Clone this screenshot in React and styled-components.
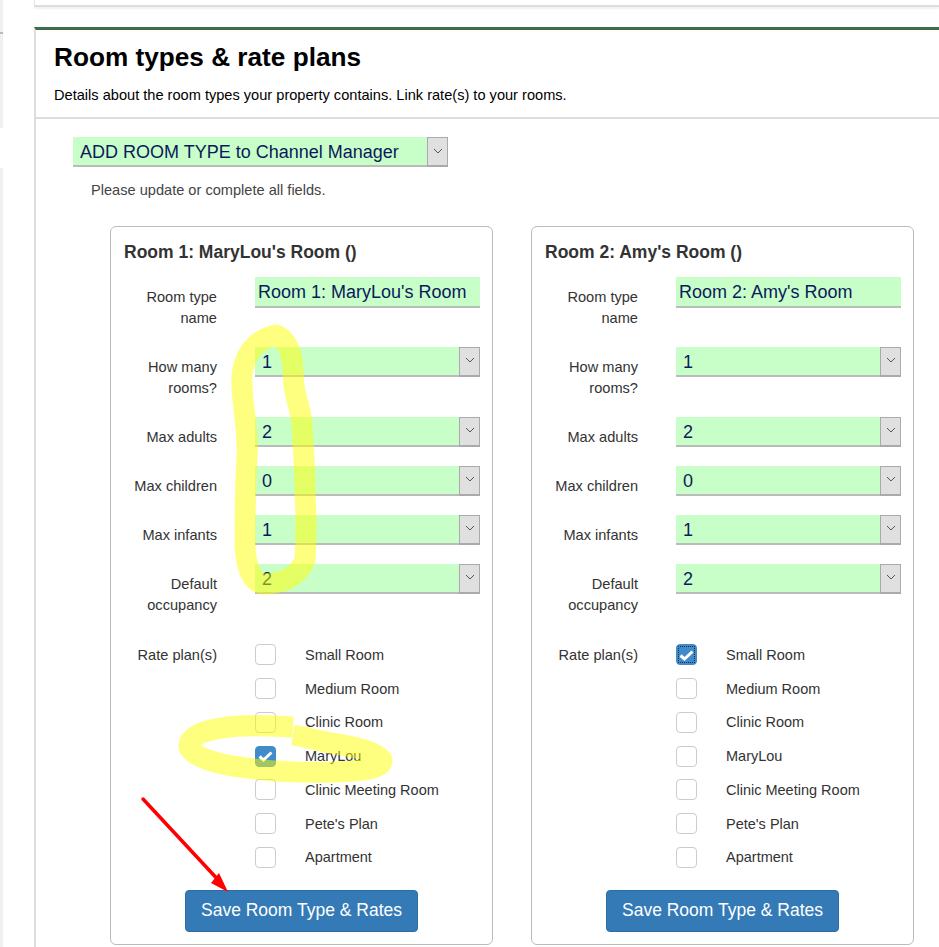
import styled, { createGlobalStyle } from "styled-components";

const GlobalStyle = createGlobalStyle`
  html, body {
    margin: 0;
    padding: 0;
    height: 947px;
    overflow: hidden;
    background: #fff;
  }
  * {
    box-sizing: border-box;
  }
`;

const Page = styled.div`
  position: relative;
  display: flex;
  width: 939px;
  height: 947px;
  overflow: hidden;
  font-family: "Liberation Sans", Arial, sans-serif;
  font-size: 14.5px;
  color: #333;
`;

const Rail = styled.div`
  display: flex;
  flex-direction: column;
  width: 3px;
  margin-right: 31px;
  flex-shrink: 0;
`;

const RailBlock = styled.div`
  background: #f0f0f0;
  height: ${(p) => p.$h}px;
  flex-grow: ${(p) => (p.$grow ? 1 : 0)};
  margin-bottom: ${(p) => p.$gap || 0}px;
`;

const RailLine = styled.div`
  background: #bbb;
  height: 2px;
`;

const Main = styled.div`
  flex: 1;
  min-width: 0;
  display: flex;
  flex-direction: column;
`;

const TopCard = styled.div`
  height: 7px;
  border-left: 1px solid #e6e6e6;
  border-bottom: 2px solid #ddd;
  box-shadow: 0 2px 2px #f2f2f2;
  margin-bottom: 20px;
`;

const Section = styled.section`
  flex: 1;
  border-top: 3px solid #3e6b48;
  border-left: 2px solid #ddd;
`;

const SectionHeader = styled.header`
  height: 89px;
  padding: 11px 0 0 18px;
  border-bottom: 2px solid #ddd;
`;

const Title = styled.h2`
  margin: 0;
  font-size: 26.2px;
  line-height: 32px;
  font-weight: bold;
  color: #000;
`;

const Subtitle = styled.p`
  margin: 12px 0 0;
  font-size: 14.6px;
  line-height: 20px;
  color: #000;
`;

const SectionBody = styled.div`
  padding: 18px 0 0 37px;
`;

const SelectWrap = styled.div`
  position: relative;
  height: 30px;
  width: ${(p) => p.$width || "100%"};
`;

const GreenSelect = styled.select`
  display: block;
  width: 100%;
  height: 100%;
  appearance: none;
  border: 0;
  border-bottom: 2px solid #bbb;
  border-radius: 0;
  background: #c8ffc8;
  padding: 2px 0 0 7px;
  font-family: "Liberation Sans", Arial, sans-serif;
  font-size: 18px;
  color: #0b1a5c;
`;

const SelectArrow = styled.span`
  position: absolute;
  top: 0;
  right: 0;
  width: 21px;
  height: 30px;
  display: flex;
  align-items: center;
  justify-content: center;
  padding-bottom: 2px;
  background: #e0e0e0;
  border: 1px solid #aaa;
  border-bottom-width: 2px;
  pointer-events: none;
`;

const Hint = styled.p`
  margin: 13px 0 0 18px;
  font-size: 14.6px;
  line-height: 20px;
  color: #444;
`;

const Cards = styled.div`
  display: flex;
  gap: 38px;
  margin: 26px 0 0 74px;
`;

const Card = styled.div`
  width: 383px;
  height: 719px;
  padding: 15px 13px 0 13px;
  border: 1px solid #bbb;
  border-radius: 6px;
`;

const CardTitle = styled.h3`
  margin: 0 0 15px;
  font-size: 17.5px;
  line-height: 20px;
  font-weight: bold;
  color: #333;
`;

const Row = styled.div`
  display: grid;
  grid-template-columns: 93px 225px;
  column-gap: 38px;
  margin-bottom: 17.6px;
`;

const FieldLabel = styled.label`
  padding-top: 10.4px;
  font-size: 14.6px;
  line-height: 21px;
  text-align: right;
  color: #333;
`;

const NameInput = styled.input`
  display: block;
  width: 100%;
  height: 31px;
  border: 0;
  border-bottom: 2px solid #bbb;
  border-radius: 0;
  background: #c8ffc8;
  padding: 2px 0 0 3px;
  font-family: "Liberation Sans", Arial, sans-serif;
  font-size: 18px;
  color: #0b1a5c;
`;

const RateRow = styled.div`
  display: grid;
  grid-template-columns: 93px 225px;
  column-gap: 38px;
  margin-top: 27.9px;
`;

const RateLabel = styled.div`
  padding-top: 1px;
  font-size: 14.6px;
  line-height: 21px;
  text-align: right;
  color: #333;
`;

const RateList = styled.div`
  display: flex;
  flex-direction: column;
  gap: 12.8px;
`;

const RateItem = styled.div`
  display: flex;
  align-items: center;
  gap: 29px;
  height: 21px;
  font-size: 14.5px;
  color: #333;
`;

const Check = styled.span`
  position: relative;
  width: 21px;
  height: 21px;
  flex-shrink: 0;
  display: flex;
  align-items: center;
  justify-content: center;
  border-radius: 4px;
  border: 1px solid ${(p) => (p.$on ? "#428bca" : "#ccc")};
  background: ${(p) => (p.$on ? "#428bca" : "#fff")};
`;

const FocusRing = styled.span`
  position: absolute;
  inset: 1px;
  border: 1px dotted #1a2a3a;
`;

const ButtonRow = styled.div`
  display: flex;
  justify-content: center;
  margin-top: 22px;
`;

const SaveButton = styled.button`
  width: 233px;
  height: 42px;
  border: 1px solid #2e6da4;
  border-radius: 4px;
  background: #337ab7;
  color: #fff;
  font-family: "Liberation Sans", Arial, sans-serif;
  font-size: 17.5px;
`;

const Markup = styled.svg`
  position: absolute;
  top: 0;
  left: 0;
  pointer-events: none;
`;

const Chevron = () => (
  <svg width="10" height="6" viewBox="0 0 10 6" fill="none">
    <path d="M1 1l4 4 4-4" stroke="#555" strokeWidth="1" />
  </svg>
);

const Select = ({ value, text, width }) => (
  <SelectWrap $width={width}>
    <GreenSelect defaultValue={value}>
      <option value={value}>{text || value}</option>
    </GreenSelect>
    <SelectArrow>
      <Chevron />
    </SelectArrow>
  </SelectWrap>
);

const fields = [
  { label: ["How many", "rooms?"], value: "1" },
  { label: ["Max adults"], value: "2" },
  { label: ["Max children"], value: "0" },
  { label: ["Max infants"], value: "1" },
  { label: ["Default", "occupancy"], value: "2" },
];

const plans = [
  "Small Room",
  "Medium Room",
  "Clinic Room",
  "MaryLou",
  "Clinic Meeting Room",
  "Pete's Plan",
  "Apartment",
];

const rooms = [
  { name: "Room 1: MaryLou's Room", checked: "MaryLou" },
  { name: "Room 2: Amy's Room", checked: "Small Room", focused: true },
];

const RoomCard = ({ room }) => (
  <Card>
    <CardTitle>{room.name} ()</CardTitle>
    <Row>
      <FieldLabel>
        Room type
        <br />
        name
      </FieldLabel>
      <NameInput defaultValue={room.name} />
    </Row>
    {fields.map((f) => (
      <Row key={f.label[0]}>
        <FieldLabel>
          {f.label.map((line, i) => (
            <span key={line}>
              {i > 0 && <br />}
              {line}
            </span>
          ))}
        </FieldLabel>
        <Select value={f.value} />
      </Row>
    ))}
    <RateRow>
      <RateLabel>Rate plan(s)</RateLabel>
      <RateList>
        {plans.map((plan) => {
          const on = plan === room.checked;
          return (
            <RateItem key={plan}>
              <Check $on={on}>
                {on && (
                  <svg width="15" height="12" viewBox="0 0 15 12" fill="none">
                    <path d="M1.5 6.5l4 3.5 8-7.5" stroke="#fff" strokeWidth="3" />
                  </svg>
                )}
                {on && room.focused && <FocusRing />}
              </Check>
              {plan}
            </RateItem>
          );
        })}
      </RateList>
    </RateRow>
    <ButtonRow>
      <SaveButton>Save Room Type &amp; Rates</SaveButton>
    </ButtonRow>
  </Card>
);

export default function App() {
  return (
    <Page>
      <GlobalStyle />
      <Rail>
        <RailBlock $h={32} />
        <RailLine />
        <RailBlock $h={94} $gap={40} />
        <RailBlock $grow />
      </Rail>
      <Main>
        <TopCard />
        <Section>
          <SectionHeader>
            <Title>Room types &amp; rate plans</Title>
            <Subtitle>
              Details about the room types your property contains. Link rate(s) to your rooms.
            </Subtitle>
          </SectionHeader>
          <SectionBody>
            <Select value="add" text="ADD ROOM TYPE to Channel Manager" width="375px" />
            <Hint>Please update or complete all fields.</Hint>
          </SectionBody>
          <Cards>
            {rooms.map((room) => (
              <RoomCard key={room.name} room={room} />
            ))}
          </Cards>
        </Section>
      </Main>
      {/* hand drawn highlighter marks and the arrow on top of the form */}
      <Markup width="939" height="947" viewBox="0 0 939 947" fill="none">
        <g stroke="#ffff00" strokeOpacity="0.5" strokeWidth="21" strokeLinejoin="round">
          <path d="M293 368 C292 355 288 340 276 335 C262 338 250 347 245 362 C240 375 242 385 243 400 C246 425 248 440 247 458 C245 490 245 520 245 545 C246 565 250 580 262 584 C280 584 298 578 305 560 C307 530 306 510 305 492 C305 465 303 445 302 425 C301 408 295 398 294 385 C293 378 293 372 293 368" />
          <path d="M293 727 C270 726 245 724 222 728 C200 731 188 738 189 747 C192 756 215 764 240 767 C265 771 300 773 335 772 C360 771 382 770 382 760 C375 750 350 746 330 743 C315 740 305 737 293 735" />
        </g>
        <path d="M143 799 L222 884" stroke="#f00" strokeWidth="3.5" strokeLinecap="round" />
        <path d="M228 892 L211 883 L219 873 Z" fill="#f00" />
      </Markup>
    </Page>
  );
}
